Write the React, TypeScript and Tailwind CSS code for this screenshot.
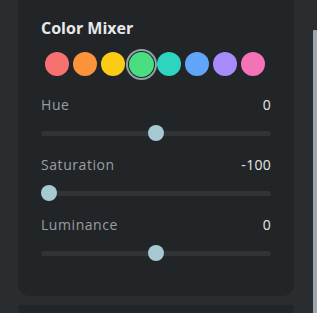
import React from "react";

const swatches = [
  "bg-[#f87171]",
  "bg-[#fb923c]",
  "bg-[#facc15]",
  "bg-[#4ade80]",
  "bg-[#2dd4bf]",
  "bg-[#60a5fa]",
  "bg-[#a78bfa]",
  "bg-[#f472b6]",
];

function Slider({ label, value, pct }: { label: string; value: string; pct: number }) {
  return (
    <div className="flex flex-col">
      <div className="flex items-center justify-between h-[20px]">
        <span className="text-[14px] font-medium tracking-[0.04em] text-[#9a9ea2]">{label}</span>
        <span className="text-[14px] font-medium tracking-[0.02em] text-[#e6e7e8]">{value}</span>
      </div>
      <div className="relative h-[16px] mt-[11px] flex items-center">
        <div className="h-[5px] w-full rounded-full bg-[#303437]" />
        <div
          className="absolute top-0 w-[16px] h-[16px] rounded-full bg-[#a7c9d1]"
          style={{ left: `calc(${pct}% - ${(pct / 100) * 16}px)` }}
        />
      </div>
    </div>
  );
}

export default function App() {
  return (
    <div
      className="w-[317px] h-[313px] overflow-hidden bg-[#2a2d30] flex"
      style={{ fontFamily: '"Open Sans", "Noto Sans", sans-serif' }}
    >
      <div className="w-[313px] flex flex-col pl-[18px] pr-[19px]">
        <div className="-mt-[12px] rounded-[12px] bg-[#222528] px-[23px] pt-[28px] pb-[35px] flex flex-col">
          <div className="text-[16px] font-bold text-[#e8e9ea] leading-[24px]">Color Mixer</div>
          <div className="flex items-center gap-[4px] mt-[8px] pl-[4px] h-[32px]">
            {swatches.map((c, i) =>
              i === 3 ? (
                <div
                  key={i}
                  className="w-[24px] h-[24px] flex items-center justify-center"
                >
                  <div className="shrink-0 w-[31px] h-[31px] rounded-full border-[2px] border-[#8fa3a8] flex items-center justify-center">
                    <div className={`w-[25px] h-[25px] rounded-full ${c}`} />
                  </div>
                </div>
              ) : (
                <div key={i} className={`w-[24px] h-[24px] rounded-full ${c}`} />
              )
            )}
          </div>
          <div className="flex flex-col gap-[13px] mt-[14px]">
            <Slider label="Hue" value="0" pct={50} />
            <Slider label="Saturation" value="-100" pct={0} />
            <Slider label="Luminance" value="0" pct={50} />
          </div>
        </div>
        <div className="mt-[9px] h-[40px] rounded-[12px] bg-[#222528]" />
      </div>
      <div className="w-[4px] pt-[30px]">
        <div className="h-full bg-[#9aa6b0] rounded-t-[1px]" />
      </div>
    </div>
  );
}
